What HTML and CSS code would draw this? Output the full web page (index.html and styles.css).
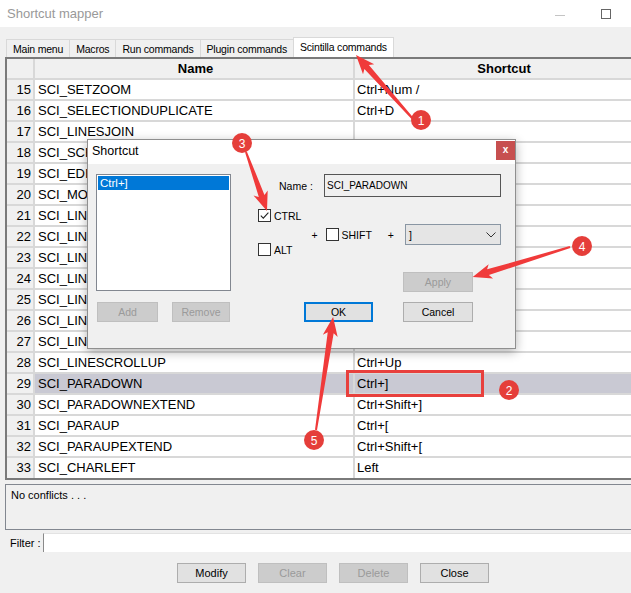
FILE: index.html
```html
<!DOCTYPE html>
<html lang="en">
<head>
  <meta charset="UTF-8">
  <meta name="viewport" content="width=device-width, initial-scale=1.0">
  <title>Shortcut mapper</title>
  <link rel="stylesheet" href="styles.css">
</head>
<body>
  <div class="window">
    <div class="titlebar">
      <span class="title">Shortcut mapper</span>
      <span class="win-min"></span>
      <span class="win-max"></span>
    </div>

    <div class="tabs">
      <div class="tab">Main menu</div>
      <div class="tab">Macros</div>
      <div class="tab">Run commands</div>
      <div class="tab">Plugin commands</div>
      <div class="tab active">Scintilla commands</div>
    </div>

    <div class="grid">
      <div class="row head"><div class="num"></div><div class="name">Name</div><div class="key">Shortcut</div></div>
      <div class="row"><div class="num">15</div><div class="name">SCI_SETZOOM</div><div class="key">Ctrl+Num /</div></div>
      <div class="row"><div class="num">16</div><div class="name">SCI_SELECTIONDUPLICATE</div><div class="key">Ctrl+D</div></div>
      <div class="row"><div class="num">17</div><div class="name">SCI_LINESJOIN</div><div class="key"></div></div>
      <div class="row"><div class="num">18</div><div class="name">SCI_SCROLLCARET</div><div class="key"></div></div>
      <div class="row"><div class="num">19</div><div class="name">SCI_EDITTOGGLEOVERTYPE</div><div class="key"></div></div>
      <div class="row"><div class="num">20</div><div class="name">SCI_MOVESELECTEDLINESUP</div><div class="key"></div></div>
      <div class="row"><div class="num">21</div><div class="name">SCI_LINEDOWN</div><div class="key"></div></div>
      <div class="row"><div class="num">22</div><div class="name">SCI_LINEDOWNEXTEND</div><div class="key"></div></div>
      <div class="row"><div class="num">23</div><div class="name">SCI_LINEDOWNRECTEXTEND</div><div class="key"></div></div>
      <div class="row"><div class="num">24</div><div class="name">SCI_LINESCROLLDOWN</div><div class="key"></div></div>
      <div class="row"><div class="num">25</div><div class="name">SCI_LINEUP</div><div class="key"></div></div>
      <div class="row"><div class="num">26</div><div class="name">SCI_LINEUPEXTEND</div><div class="key"></div></div>
      <div class="row"><div class="num">27</div><div class="name">SCI_LINEUPRECTEXTEND</div><div class="key"></div></div>
      <div class="row"><div class="num">28</div><div class="name">SCI_LINESCROLLUP</div><div class="key">Ctrl+Up</div></div>
      <div class="row selected"><div class="num">29</div><div class="name">SCI_PARADOWN</div><div class="key">Ctrl+]</div></div>
      <div class="row"><div class="num">30</div><div class="name">SCI_PARADOWNEXTEND</div><div class="key">Ctrl+Shift+]</div></div>
      <div class="row"><div class="num">31</div><div class="name">SCI_PARAUP</div><div class="key">Ctrl+[</div></div>
      <div class="row"><div class="num">32</div><div class="name">SCI_PARAUPEXTEND</div><div class="key">Ctrl+Shift+[</div></div>
      <div class="row"><div class="num">33</div><div class="name">SCI_CHARLEFT</div><div class="key">Left</div></div>
    </div>

    <div class="conflicts">No conflicts . . .</div>

    <div class="filter">
      <span class="filter-label">Filter :</span>
      <div class="filter-input"></div>
    </div>

    <div class="actions">
      <div class="btn">Modify</div>
      <div class="btn disabled">Clear</div>
      <div class="btn disabled">Delete</div>
      <div class="btn">Close</div>
    </div>
  </div>

  <!-- the edit dialog floats over the grid -->
  <div class="dialog">
    <div class="dlg-title">
      <span>Shortcut</span>
      <span class="dlg-close">x</span>
    </div>
    <div class="dlg-body">
      <div class="dlg-left">
        <div class="listbox">
          <div class="list-item selected">Ctrl+]</div>
        </div>
        <div class="list-buttons">
          <div class="btn disabled btn-add">Add</div>
          <div class="btn disabled btn-remove">Remove</div>
        </div>
      </div>

      <div class="dlg-right">
        <div class="name-row">
          <span class="name-label">Name :</span>
          <div class="name-field">SCI_PARADOWN</div>
        </div>

        <div class="keys">
          <div class="mods">
            <div class="check">
              <span class="box">
                <svg width="11" height="11" viewBox="0 0 11 11"><path d="M1.8 5.6 L4.3 8.1 L9.4 2.6" fill="none" stroke="#222" stroke-width="1.1"/></svg>
              </span>
              CTRL
            </div>
            <div class="check"><span class="box"></span>ALT</div>
          </div>
          <div class="key-line">
            <span class="plus">+</span>
            <div class="check shift"><span class="box"></span>SHIFT</div>
            <span class="plus plus-2">+</span>
            <div class="combo">
              <span>]</span>
              <svg width="10" height="6" viewBox="0 0 10 6"><path d="M0.5 0.5 L5 5 L9.5 0.5" fill="none" stroke="#333" stroke-width="1"/></svg>
            </div>
          </div>
        </div>

        <div class="btn disabled btn-apply">Apply</div>

        <div class="dlg-buttons">
          <div class="btn default btn-ok">OK</div>
          <div class="btn btn-cancel">Cancel</div>
        </div>
      </div>
    </div>
  </div>

  <!-- red callouts drawn on top of the screenshot -->
  <svg class="marks" width="631" height="593" viewBox="0 0 631 593">
    <rect x="347.5" y="371.5" width="135" height="24" fill="none" stroke="#e8403d" stroke-width="3"/>

    <g fill="#f03a3a">
      <polygon transform="translate(413,119) rotate(-131.7)" points="0,-1 69.7,-3 66.7,-7.5 85.7,0 66.7,7.5 69.7,3 0,1"/>
      <polygon transform="translate(246,152) rotate(70.4)" points="0,-1 46.6,-3 43.6,-7.5 62.6,0 43.6,7.5 46.6,3 0,1"/>
      <polygon transform="translate(570,247) rotate(162.9)" points="0,-1 85.8,-3 82.8,-7.5 101.8,0 82.8,7.5 85.8,3 0,1"/>
      <polygon transform="translate(316,430) rotate(-81.4)" points="0,-1 98.3,-3 95.3,-7.5 114.3,0 95.3,7.5 98.3,3 0,1"/>
    </g>

    <g class="badge">
      <circle cx="421" cy="120" r="10"/><text x="421" y="124.5">1</text>
      <circle cx="509" cy="390" r="10"/><text x="509" y="394.5">2</text>
      <circle cx="242" cy="143" r="10"/><text x="242" y="147.5">3</text>
      <circle cx="582" cy="246" r="10"/><text x="582" y="250.5">4</text>
      <circle cx="314" cy="440" r="10"/><text x="314" y="444.5">5</text>
    </g>
  </svg>
</body>
</html>
```

FILE: styles.css
```css
/* Global */
* {
  margin: 0;
  padding: 0;
  box-sizing: border-box;
}

body {
  position: relative;
  width: 631px;
  height: 593px;
  overflow: hidden;
  background: #f0f0f0;
  font-family: 'Liberation Sans', Arial, sans-serif;
  font-size: 11px;
  color: #000;
}

.window {
  width: 666px;
}

/* Title bar */
.titlebar {
  height: 27px;
  display: flex;
  align-items: center;
  padding-left: 7px;
  background: #fff;
}

.title {
  font-size: 13px;
  color: #999;
}

.win-min {
  margin-left: auto;
  margin-right: 36px;
  width: 10px;
  height: 1px;
  margin-top: 3px;
  background: #c4c4c4;
}

.win-max {
  width: 10px;
  height: 10px;
  margin-right: 55px;
  border: 1px solid #666;
}

/* Tabs */
.tabs {
  height: 30px;
  display: flex;
  align-items: flex-end;
  padding-left: 6px;
}

.tab {
  height: 18px;
  padding: 0 6px;
  border: 1px solid #d9d9d9;
  border-bottom: none;
  border-right: none;
  font-size: 10.5px;
  letter-spacing: -0.2px;
  line-height: 19px;
}

.tab.active {
  height: 20px;
  padding: 0 6px;
  background: #fff;
  border-right: 1px solid #d9d9d9;
  line-height: 18px;
}

/* Command grid */
.grid {
  margin-left: 5px;
  border: 2px solid #7a7a7a;
  border-right: none;
  font-size: 13px;
}

.row {
  display: flex;
  height: 21px;
  line-height: 19px;
  border-bottom: 2px solid #d8d8d8;
  background: #fff;
  white-space: nowrap;
}

.row:last-child {
  border-bottom: none;
  height: 20px;
}

.num {
  width: 28px;
  padding-right: 2px;
  text-align: right;
  background: #f0f0f0;
  border-right: 2px solid #d8d8d8;
}

.name {
  width: 320px;
  padding-left: 3px;
  overflow: hidden;
  border-right: 2px solid #d8d8d8;
}

.key {
  width: 296px;
  padding-left: 2px;
}

.row.head {
  background: #f0f0f0;
  font-weight: bold;
}

.row.head .name,
.row.head .key {
  text-align: center;
}

.row.selected .name,
.row.selected .key {
  background: #c9c9d3;
}

/* Bottom part */
.conflicts {
  height: 46px;
  margin: 4px 0 0 5px;
  padding: 4px 5px;
  border: 1px solid #828790;
  line-height: 13px;
}

.filter {
  height: 19px;
  margin-top: 3px;
  display: flex;
  align-items: center;
}

.filter-label {
  width: 43px;
  padding-left: 10px;
}

.filter-input {
  flex: 1;
  height: 19px;
  background: #fff;
  border-left: 1px solid #8a8a8a;
  border-top: 1px solid #e3e3e3;
}

.actions {
  margin-top: 11px;
  display: flex;
  justify-content: center;
  gap: 12px;
}

.btn {
  height: 20px;
  width: 69px;
  display: flex;
  align-items: center;
  justify-content: center;
  background: #e1e1e1;
  border: 1px solid #adadad;
}

.btn.disabled {
  background: #cccccc;
  border-color: #bfbfbf;
  color: #9a9a9a;
}

.btn.default {
  border: 2px solid #0078d7;
}

/* Shortcut dialog */
.dialog {
  position: absolute;
  left: 87px;
  top: 139px;
  width: 429px;
  height: 210px;
  background: #f0f0f0;
  border: 1px solid #8f8f8f;
  box-shadow: 0 3px 10px rgba(0, 0, 0, 0.3);
  font-size: 10.5px;
}

.dlg-title {
  height: 24px;
  display: flex;
  align-items: flex-start;
  padding-left: 4px;
  background: #fff;
  font-size: 12.5px;
}

.dlg-title span:first-child {
  margin-top: 4px;
}

.dlg-close {
  margin: 1px 0 0 auto;
  width: 19px;
  height: 19px;
  background: #c75050;
  color: #fff;
  font-size: 10px;
  font-weight: bold;
  text-align: center;
  line-height: 17px;
}

.dlg-body {
  display: flex;
  padding: 10px 0 0 8px;
}

.dlg-left {
  width: 135px;
}

.listbox {
  height: 117px;
  padding: 1px;
  background: #fff;
  border: 1px solid #828790;
}

.list-item {
  height: 14px;
  padding-left: 2px;
  line-height: 14px;
  font-size: 11.5px;
}

.list-item.selected {
  background: #0078d7;
  color: #fff;
}

.list-buttons {
  display: flex;
  margin-top: 11px;
}

.btn-add {
  width: 61px;
  margin-left: 1px;
}

.btn-remove {
  width: 58px;
  margin-left: 14px;
}

.dlg-right {
  width: 243px;
  margin-left: 27px;
  display: flex;
  flex-direction: column;
}

.name-row {
  height: 23px;
  display: flex;
  align-items: center;
}

.name-label {
  padding-left: 21px;
}

.name-field {
  margin-left: auto;
  width: 177px;
  height: 23px;
  padding-left: 2px;
  line-height: 21px;
  font-size: 10px;
  border: 1px solid #555;
  background: #f0f0f0;
}

.keys {
  display: flex;
  margin-top: 12px;
}

.mods {
  width: 54px;
  display: flex;
  flex-direction: column;
  gap: 21px;
}

.check {
  display: flex;
  align-items: center;
  gap: 3px;
  height: 13px;
}

.box {
  width: 13px;
  height: 13px;
  border: 1px solid #333;
  background: #fff;
  display: flex;
  align-items: center;
  justify-content: center;
}

.key-line {
  display: flex;
  align-items: center;
  margin-top: 4px;
}

.check.shift {
  margin-left: 8px;
}

.plus-2 {
  margin-left: 16px;
}

.combo {
  margin-left: 11px;
  width: 96px;
  height: 21px;
  padding: 0 4px 0 3px;
  display: flex;
  align-items: center;
  justify-content: space-between;
  background: #e5e5e5;
  border: 1px solid #8996a3;
}

.btn-apply {
  align-self: flex-end;
  width: 70px;
  margin: 16px 28px 0 0;
}

.dlg-buttons {
  display: flex;
  margin-top: 10px;
}

.btn-ok {
  margin-left: 46px;
}

.btn-cancel {
  width: 70px;
  margin-left: 30px;
}

/* Callouts */
.marks {
  position: absolute;
  left: 0;
  top: 0;
  pointer-events: none;
}

.badge circle {
  fill: #e53e3a;
}

.badge text {
  fill: #fff;
  font-family: 'Liberation Sans', Arial, sans-serif;
  font-size: 12px;
  text-anchor: middle;
}
```
